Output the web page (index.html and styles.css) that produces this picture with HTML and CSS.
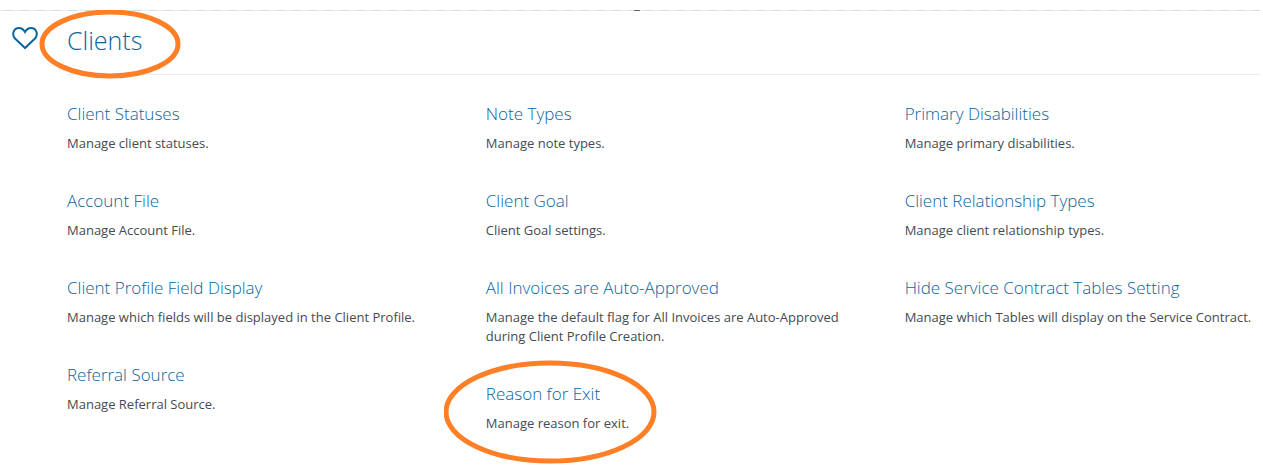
FILE: index.html
```html
<!DOCTYPE html>
<html lang="en">

<head>
  <meta charset="UTF-8">
  <meta name="viewport" content="width=device-width, initial-scale=1">
  <title>Clients</title>
  <link rel="stylesheet" href="styles.css">
</head>

<body>
  <div class="divider"><span class="divider-mark"></span></div>
  <section class="section">
    <div class="icon">
      <svg width="26" height="24" viewBox="0 0 26 24" aria-hidden="true">
        <path d="M13 22 L3 12.5 C-0.5 8.5 1.5 2 7 2 C10 2 11.8 4 13 6 C14.2 4 16 2 19 2 C24.500 2 26.500 8.500 23 12.500 Z"/>
      </svg>
    </div>
    <div class="content">
      <header class="section-header">
        <h1 class="marked marked-title">Clients
          <svg class="ring" viewBox="0 0 142 69" aria-hidden="true"><ellipse cx="71" cy="34" rx="68" ry="32"/></svg>
        </h1>
      </header>
      <div class="columns">
        <div class="column">
          <div class="item">
            <a href="#">Client Statuses</a>
            <p>Manage client statuses.</p>
          </div>
          <div class="item">
            <a href="#">Account File</a>
            <p>Manage Account File.</p>
          </div>
          <div class="item">
            <a href="#">Client Profile Field Display</a>
            <p>Manage which fields will be displayed in the Client Profile.</p>
          </div>
          <div class="item">
            <a href="#">Referral Source</a>
            <p>Manage Referral Source.</p>
          </div>
        </div>
        <div class="column">
          <div class="item">
            <a href="#">Note Types</a>
            <p>Manage note types.</p>
          </div>
          <div class="item">
            <a href="#">Client Goal</a>
            <p>Client Goal settings.</p>
          </div>
          <div class="item">
            <a href="#">All Invoices are Auto-Approved</a>
            <p>Manage the default flag for All Invoices are Auto-Approved during Client Profile Creation.</p>
          </div>
          <div class="item marked marked-item">
            <a href="#">Reason for Exit</a>
            <p>Manage reason for exit.</p>
            <svg class="ring" viewBox="0 0 213 104" aria-hidden="true"><ellipse cx="106" cy="52" rx="104" ry="49"/></svg>
          </div>
        </div>
        <div class="column">
          <div class="item">
            <a href="#">Primary Disabilities</a>
            <p>Manage primary disabilities.</p>
          </div>
          <div class="item">
            <a href="#">Client Relationship Types</a>
            <p>Manage client relationship types.</p>
          </div>
          <div class="item">
            <a href="#">Hide Service Contract Tables Setting</a>
            <p>Manage which Tables will display on the Service Contract.</p>
          </div>
        </div>
      </div>
    </div>
  </section>
</body>

</html>
```

FILE: styles.css
```css
* {
  box-sizing: border-box;
}

body {
  margin: 0;
  padding: 10px 3px 0 0;
  background: #fff;
  color: #444b51;
  font-family: "Open Sans", "Noto Sans", sans-serif;
  font-size: 13px;
  line-height: 19px;
}

.divider {
  height: 1px;
  padding-left: 14px;
  background: repeating-linear-gradient(90deg, #e5eceb 0, #e5eceb 5px, #d5dcdb 5px, #d5dcdb 13px, #e5eceb 13px, #e5eceb 16px);
}

.divider-mark {
  display: block;
  width: 6px;
  height: 1px;
  margin: 0 auto;
  background: #666;
}

.section {
  display: flex;
}

.icon {
  width: 67px;
  padding: 15px 0 0 12px;
}

.icon svg {
  display: block;
  fill: none;
  stroke: #0a659c;
  stroke-width: 2;
}

.content {
  flex: 1;
  min-width: 0;
}

.section-header {
  padding: 11px 0 15px;
  border-bottom: 1px solid #ececec;
}

h1 {
  margin: 0;
  color: #0a659c;
  font-size: 25px;
  font-weight: 300;
  line-height: 37px;
}

.columns {
  display: grid;
  grid-template-columns: 33fr 33fr 28fr;
  padding-top: 27px;
}

.item {
  padding-bottom: 36px;
}

.item a {
  color: #0a659c;
  font-size: 17px;
  font-weight: 300;
  line-height: 24px;
  text-decoration: none;
}

.item a:hover {
  text-decoration: underline;
}

.item p {
  max-width: 360px;
  margin: 8px 0 0;
}

/* highlight rings */
.marked {
  position: relative;
  width: fit-content;
}

.ring {
  position: absolute;
  fill: none;
  stroke: #ff7f27;
  stroke-width: 5;
  pointer-events: none;
}

.marked-title .ring {
  top: -12px;
  left: -28px;
  width: 142px;
}

.marked-item .ring {
  top: -22px;
  left: -42px;
  width: 213px;
}
```
